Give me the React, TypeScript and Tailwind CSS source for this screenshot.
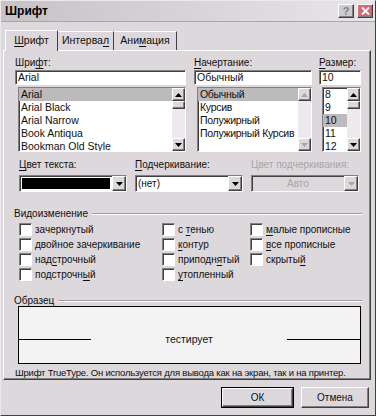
import React from "react";

const raised =
  "border border-t-white border-l-white border-b-[#404040] border-r-[#404040] shadow-[inset_-1px_-1px_0_#808080]";
const sunken =
  "border border-t-[#808080] border-l-[#808080] border-b-white border-r-white shadow-[inset_1px_1px_0_#404040]";

const U = ({ children }: { children: React.ReactNode }) => <span className="underline underline-offset-2">{children}</span>;

const Arrow = ({ dir, gray }: { dir: "up" | "down"; gray?: boolean }) => (
  <svg width="7" height="4" viewBox="0 0 7 4">
    <path d={dir === "up" ? "M3.5 0 L7 4 L0 4 Z" : "M0 0 L7 0 L3.5 4 Z"} fill={gray ? "#a8a6a8" : "#000"} />
  </svg>
);

const ArrowBtn = ({ dir, gray }: { dir: "up" | "down"; gray?: boolean }) => (
  <div className={`w-[13px] h-[13px] bg-[#dcd8dc] flex items-center justify-center ${raised}`}>
    <Arrow dir={dir} gray={gray} />
  </div>
);

const ListBox = ({
  items,
  selected,
  width,
  thumb,
  gray,
}: {
  items: string[];
  selected: number;
  width: string;
  thumb?: boolean;
  gray?: boolean;
}) => (
  <div className={`${width} h-[65px] flex bg-white ${sunken}`}>
    <div className="flex-1 min-w-0 overflow-hidden text-[10.5px]">
      {items.map((it, i) => (
        <div
          key={it}
          className={`h-[13px] leading-[13px] pl-[2px] whitespace-nowrap ${i === selected ? "bg-[#bcbabd]" : ""}`}
        >
          {it}
        </div>
      ))}
    </div>
    <div className="w-[13px] flex flex-col bg-[#eceaec]">
      <ArrowBtn dir="up" gray={gray} />
      {thumb && <div className={`h-[8px] bg-[#dcd8dc] ${raised}`} />}
      <div className="flex-1" />
      <ArrowBtn dir="down" gray={gray} />
    </div>
  </div>
);

const Combo = ({ children, disabled }: { children: React.ReactNode; disabled?: boolean }) => (
  <div className={`w-[108px] h-[17px] flex ${disabled ? "bg-[#dcd8dc]" : "bg-white"} ${sunken}`}>
    <div className="flex-1 min-w-0 flex items-center">{children}</div>
    <div className={`w-[14px] bg-[#dcd8dc] flex items-center justify-center ${raised}`}>
      <Arrow dir="down" gray={disabled} />
    </div>
  </div>
);

const Check = ({ label }: { label: React.ReactNode }) => (
  <div className="flex items-center h-[13px] gap-[3px] whitespace-nowrap">
    <div className={`w-[13px] h-[13px] bg-white shrink-0 ${sunken}`} />
    <span className="leading-[13px]">{label}</span>
  </div>
);

export default function App() {
  return (
    <div
      className="w-[376px] h-[416px] bg-[#dcd8dc] text-[10px] text-[#101010] border border-t-[#ece9ec] border-l-[#ece9ec] border-b-[#404040] border-r-[#404040] overflow-hidden"
      style={{ fontFamily: '"Liberation Sans", Arial, sans-serif' }}
    >
      {/* title bar */}
      <div className="h-[21px] flex items-center justify-between pl-[4px] pr-[2px] bg-gradient-to-r from-[#c6c2c6] to-[#e8e6e8] border-b border-[#a8a6a8]">
        <span className="font-bold text-[12px] text-black">Шрифт</span>
        <div className="flex gap-[3px]">
          <div className={`w-[16px] h-[14px] bg-[#cfcccf] flex items-center justify-center text-[11px] font-bold text-[#808080] ${raised}`}>
            ?
          </div>
          <div className={`w-[16px] h-[14px] bg-[#d86878] flex items-center justify-center ${raised}`}>
            <svg width="9" height="8" viewBox="0 0 9 8">
              <path d="M1 0.5 L8 7.5 M8 0.5 L1 7.5" stroke="#fff" strokeWidth="1.8" />
            </svg>
          </div>
        </div>
      </div>

      {/* tabs */}
      <div className="flex items-end h-[28px] pl-[4px] text-[10.5px]">
        <div className="h-[21px] w-[53px] flex items-center justify-center border-t border-l border-white border-r-[1px] border-r-[#404040] bg-[#dcd8dc] relative z-10 -mb-px">
          <U>Ш</U>рифт
        </div>
        <div className="h-[19px] w-[56px] flex items-center justify-center border-t border-white border-r border-r-[#404040]">
          Интерва<U>л</U>
        </div>
        <div className="h-[19px] w-[63px] flex items-center justify-center border-t border-white border-r border-r-[#404040]">
          Ани<U>м</U>ация
        </div>
      </div>

      {/* panel */}
      <div className="ml-[2px] w-[368px] h-[330px] border border-t-white border-l-white border-b-[#404040] border-r-[#404040] shadow-[inset_-1px_-1px_0_#808080] pl-[11px] pt-[5px]">
        <div className="flex">
          <div className="w-[171px]">
            <div className="h-[13px] leading-[13px]">Шри<U>ф</U>т:</div>
            <div className={`mt-[1px] h-[15px] bg-white pl-[2px] leading-[12px] text-[10.5px] ${sunken}`}>Arial</div>
            <div className="ml-[3px] mt-[2px]">
              <ListBox
                width="w-[168px]"
                selected={0}
                thumb
                items={["Arial", "Arial Black", "Arial Narrow", "Book Antiqua", "Bookman Old Style"]}
              />
            </div>
          </div>
          <div className="w-[118px] ml-[8px]">
            <div className="h-[13px] leading-[13px]"><U>Н</U>ачертание:</div>
            <div className={`mt-[1px] h-[15px] bg-white pl-[2px] leading-[12px] text-[10.5px] ${sunken}`}>Обычный</div>
            <div className="ml-[3px] mt-[2px] tracking-[-0.3px]">
              <ListBox
                width="w-[115px]"
                selected={0}
                gray
                items={["Обычный", "Курсив", "Полужирный", "Полужирный Курсив"]}
              />
            </div>
          </div>
          <div className="w-[42px] ml-[7px]">
            <div className="h-[13px] leading-[13px]"><U>Р</U>азмер:</div>
            <div className={`mt-[1px] h-[15px] bg-white pl-[2px] leading-[12px] text-[10.5px] ${sunken}`}>10</div>
            <div className="ml-[3px] mt-[2px]">
              <ListBox width="w-[39px]" selected={2} thumb items={["8", "9", "10", "11", "12"]} />
            </div>
          </div>
        </div>

        {/* colour / underline row */}
        <div className="flex gap-[8px] pl-[4px] mt-[6px]">
          <div>
            <div className="h-[13px] leading-[13px]"><U>Ц</U>вет текста:</div>
            <div className="mt-[4px]">
              <Combo>
                <div className="mx-[2px] h-[11px] flex-1 bg-black" />
              </Combo>
            </div>
          </div>
          <div>
            <div className="h-[13px] leading-[13px]"><U>П</U>одчеркивание:</div>
            <div className="mt-[4px]">
              <Combo>
                <span className="pl-[2px]">(нет)</span>
              </Combo>
            </div>
          </div>
          <div>
            <div className="h-[13px] leading-[13px] text-[#a8a6a8]">Цвет подчеркивания:</div>
            <div className="mt-[4px]">
              <Combo disabled>
                <span className="flex-1 text-center text-[#a8a6a8]">Авто</span>
              </Combo>
            </div>
          </div>
        </div>

        {/* effects */}
        <div className="mt-[15px] flex items-center pr-[8px] -ml-[1px]">
          <span className="h-[13px] leading-[13px] pr-[4px]">Видоизменение</span>
          <div className="flex-1 h-[2px] border-t border-[#a09ea0] border-b border-b-white" />
        </div>
        <div className="mt-[3px] grid grid-cols-[143px_88px_1fr] gap-y-[2px] pl-[4px]">
          <Check label="зачеркнутый" />
          <Check label={<>с <U>т</U>енью</>} />
          <Check label={<><U>м</U>алые прописные</>} />
          <Check label="двойное зачеркивание" />
          <Check label={<><U>к</U>онтур</>} />
          <Check label={<><U>в</U>се прописные</>} />
          <Check label={<>над<U>с</U>трочный</>} />
          <Check label={<>приподн<U>я</U>тый</>} />
          <Check label={<>скрыты<U>й</U></>} />
          <Check label={<>подстрочн<U>ы</U>й</>} />
          <Check label={<><U>у</U>топленный</>} />
        </div>

        {/* sample */}
        <div className="mt-[13px] flex items-center pr-[8px] -ml-[1px]">
          <span className="h-[13px] leading-[13px] pr-[4px]">Образец</span>
          <div className="flex-1 h-[2px] border-t border-[#a09ea0] border-b border-b-white" />
        </div>
        <div className="ml-[3px] -mt-[1px] w-[343px] h-[58px] border border-black bg-[#f4f3f4]">
          <div className="mt-[26px] h-[13px] flex items-center">
            <div className="w-[72px] h-px bg-black" />
            <div className="flex-1 text-center leading-[13px] text-[10.5px]">тестирует</div>
            <div className="w-[73px] h-px bg-black" />
          </div>
        </div>
        <div className="mt-[2px] h-[13px] leading-[13px] whitespace-nowrap text-[9.5px] tracking-[-0.2px]">
          Шрифт TrueType. Он используется для вывода как на экран, так и на принтер.
        </div>
      </div>

      {/* buttons */}
      <div className="flex justify-end gap-[7px] pr-[6px] mt-[7px]">
        <div className="w-[73px] h-[21px] border border-black">
          <div className={`h-full flex items-center justify-center ${raised}`}>ОК</div>
        </div>
        <div className={`w-[68px] h-[21px] flex items-center justify-center ${raised}`}>Отмена</div>
      </div>
    </div>
  );
}
